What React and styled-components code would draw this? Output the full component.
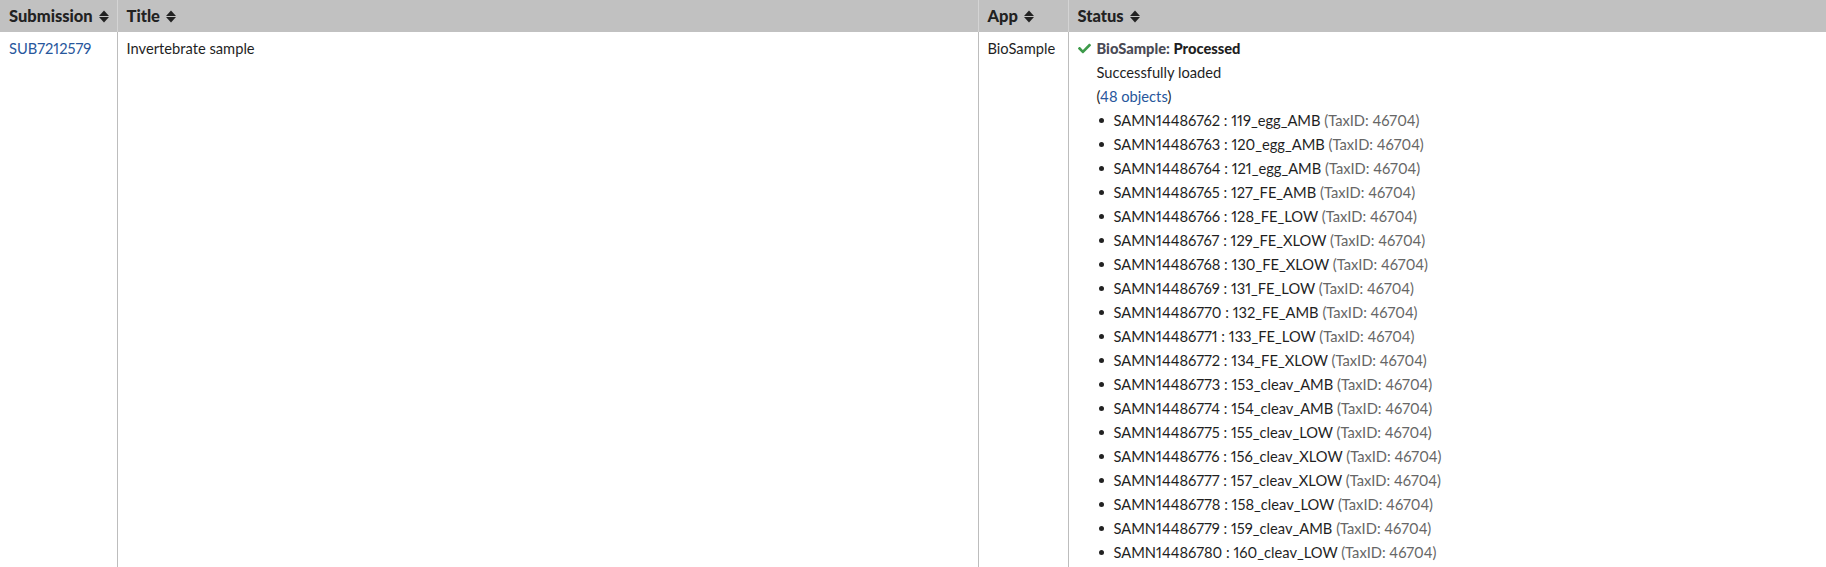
import styled, { createGlobalStyle } from "styled-components";
import { FaCheck } from "react-icons/fa";

const GlobalStyle = createGlobalStyle`
  body {
    margin: 0;
    background: #fff;
    font-family: Lato, "Liberation Sans", sans-serif;
    font-variant-numeric: proportional-nums;
    color: #1f1f1f;
  }
`;

const samples = [
  ["SAMN14486762", "119_egg_AMB"],
  ["SAMN14486763", "120_egg_AMB"],
  ["SAMN14486764", "121_egg_AMB"],
  ["SAMN14486765", "127_FE_AMB"],
  ["SAMN14486766", "128_FE_LOW"],
  ["SAMN14486767", "129_FE_XLOW"],
  ["SAMN14486768", "130_FE_XLOW"],
  ["SAMN14486769", "131_FE_LOW"],
  ["SAMN14486770", "132_FE_AMB"],
  ["SAMN14486771", "133_FE_LOW"],
  ["SAMN14486772", "134_FE_XLOW"],
  ["SAMN14486773", "153_cleav_AMB"],
  ["SAMN14486774", "154_cleav_AMB"],
  ["SAMN14486775", "155_cleav_LOW"],
  ["SAMN14486776", "156_cleav_XLOW"],
  ["SAMN14486777", "157_cleav_XLOW"],
  ["SAMN14486778", "158_cleav_LOW"],
  ["SAMN14486779", "159_cleav_AMB"],
  ["SAMN14486780", "160_cleav_LOW"],
];

const SortIcon = () => (
  <SortSvg viewBox="0 0 10 12">
    <path d="M5 0 L10 5.4 H0 Z" fill="currentColor" />
    <path d="M5 12 L10 6.6 H0 Z" fill="currentColor" />
  </SortSvg>
);

const App = () => {
  return (
    <>
      <GlobalStyle />
      <Table>
        <colgroup>
          <col style={{ width: 117 }} />
          <col style={{ width: 861 }} />
          <col style={{ width: 90 }} />
          <col />
        </colgroup>
        <thead>
          <tr>
            <HeadCell>Submission <SortIcon /></HeadCell>
            <HeadCell>Title <SortIcon /></HeadCell>
            <HeadCell>App <SortIcon /></HeadCell>
            <HeadCell>Status <SortIcon /></HeadCell>
          </tr>
        </thead>
        <tbody>
          <tr>
            <Cell>
              <StyledLink href="#">SUB7212579</StyledLink>
            </Cell>
            <Cell>Invertebrate sample</Cell>
            <Cell>BioSample</Cell>
            <Cell>
              <StatusLine>
                <Check><FaCheck /></Check>
                <AppName>BioSample:</AppName>&nbsp;<strong>Processed</strong>
              </StatusLine>
              <StatusBody>
                <div>Successfully loaded</div>
                <div>
                  (<StyledLink href="#">48 objects</StyledLink>)
                </div>
                <List>
                  {samples.map(([acc, name]) => (
                    <Item key={acc}>
                      <Bullet />
                      {acc} : {name}&nbsp;<TaxId>(TaxID: 46704)</TaxId>
                    </Item>
                  ))}
                </List>
              </StatusBody>
            </Cell>
          </tr>
        </tbody>
      </Table>
    </>
  );
};

const Table = styled.table`
  width: 100%;
  border-collapse: collapse;
  table-layout: fixed;
  font-size: 14.7px;
  line-height: 24px;
`;
const HeadCell = styled.th`
  background: #c1c1c1;
  text-align: left;
  font-weight: 900;
  font-size: 16.5px;
  color: #222;
  padding: 4px 9px;
  border-left: 1px solid #d4d4d4;
  white-space: nowrap;
  &:first-child {
    border-left: none;
  }
`;
const SortSvg = styled.svg`
  width: 10px;
  height: 13px;
  margin-left: 2px;
  vertical-align: -1px;
  color: #222;
`;
const Cell = styled.td`
  vertical-align: top;
  padding: 4px 9px;
  border-left: 1px solid #bdbdbd;
  &:first-child {
    border-left: none;
  }
`;
const StyledLink = styled.a`
  color: #28579c;
  text-decoration: none;
`;
const StatusLine = styled.div`
  display: flex;
  align-items: center;
  font-weight: 900;
`;
const Check = styled.span`
  display: inline-flex;
  width: 19px;
  color: #3d9a4a;
  font-size: 13px;
`;
const AppName = styled.span`
  color: #4a4a55;
`;
const StatusBody = styled.div`
  padding-left: 19px;
`;
const List = styled.ul`
  list-style: none;
  margin: 0;
  padding: 0;
`;
const Item = styled.li`
  display: flex;
  align-items: center;
`;
const Bullet = styled.span`
  width: 5px;
  height: 5px;
  border-radius: 50%;
  background: #222;
  margin: 0 10px 0 2px;
`;
const TaxId = styled.span`
  color: #666;
`;

export default App;
